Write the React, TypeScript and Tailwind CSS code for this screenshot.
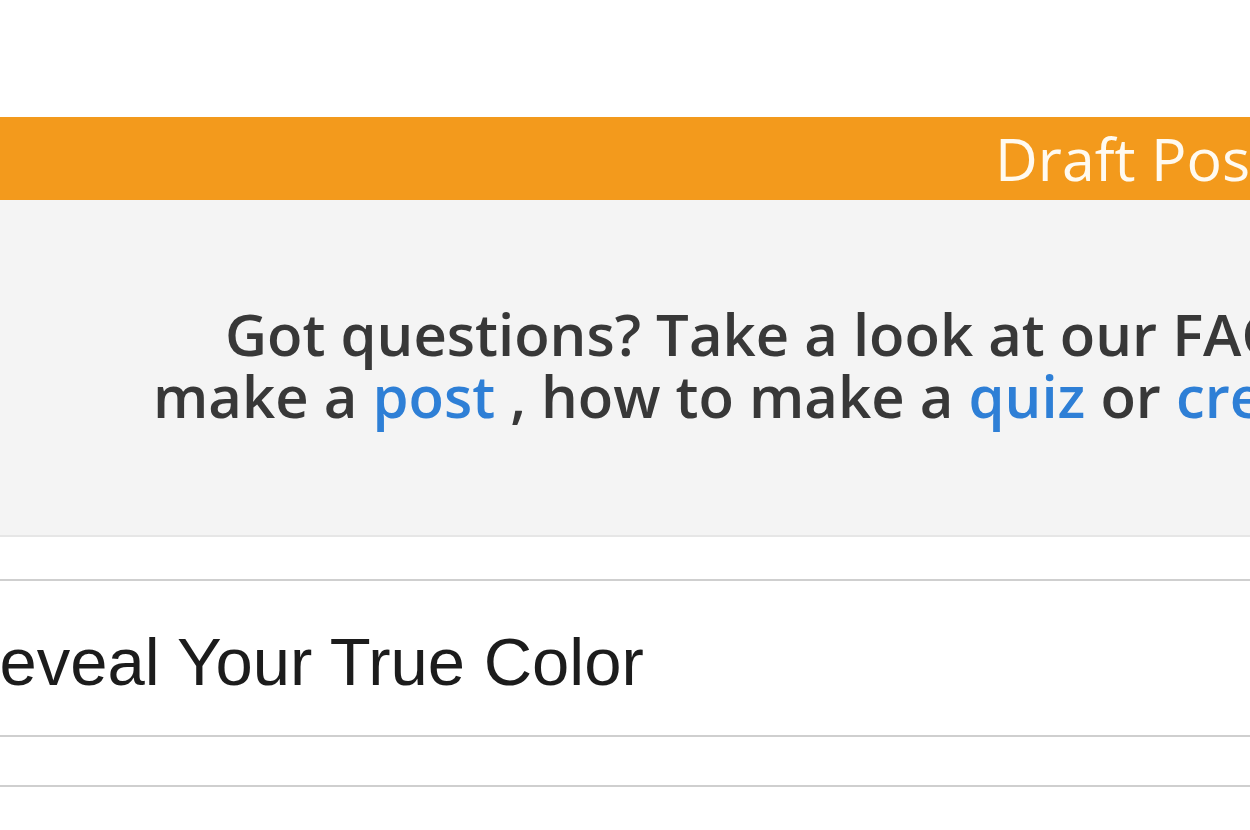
export default function App() {
  return (
    <div className="h-[830px] w-[1250px] overflow-hidden bg-white" style={{ fontFamily: '"Open Sans", "Liberation Sans", sans-serif' }}>
      <div className="h-[117px]" />

      {/* Orange draft bar */}
      <div className="flex h-[83px] items-center justify-start overflow-hidden whitespace-nowrap bg-[#f39a1c] pl-[995px]">
        <span className="text-[59px] leading-none font-normal text-[#fffaf0]">Draft Post</span>
      </div>

      {/* FAQ notice */}
      <div className="h-[337px] overflow-hidden whitespace-nowrap border-b-2 border-[#e6e6e6] bg-[#f4f4f4] pt-[103px] text-[58px] leading-[62px] font-semibold text-[#383838]">
        <div className="pl-[225px]">Got questions? Take a look at our FAQ, or our guides on how to</div>
        <div className="pl-[153px]">
          make a <span className="text-[#2e7fd6]">post</span> , how to make a <span className="text-[#2e7fd6]">quiz</span> or{' '}
          <span className="text-[#2e7fd6]">create a list</span>
        </div>
      </div>

      <div className="h-[42px]" />

      {/* Title field */}
      <div className="flex h-[158px] items-center overflow-hidden whitespace-nowrap border-y-2 border-[#cfcfcf] pt-[6px]">
        <span className="ml-[-49px] text-[67px] leading-none text-[#1c1c1c]" style={{ fontFamily: '"Liberation Sans", Arial, sans-serif' }}>
          Reveal Your True Color
        </span>
      </div>

      <div className="h-[48px]" />

      <div className="border-t-2 border-[#cfcfcf]" />
    </div>
  );
}
